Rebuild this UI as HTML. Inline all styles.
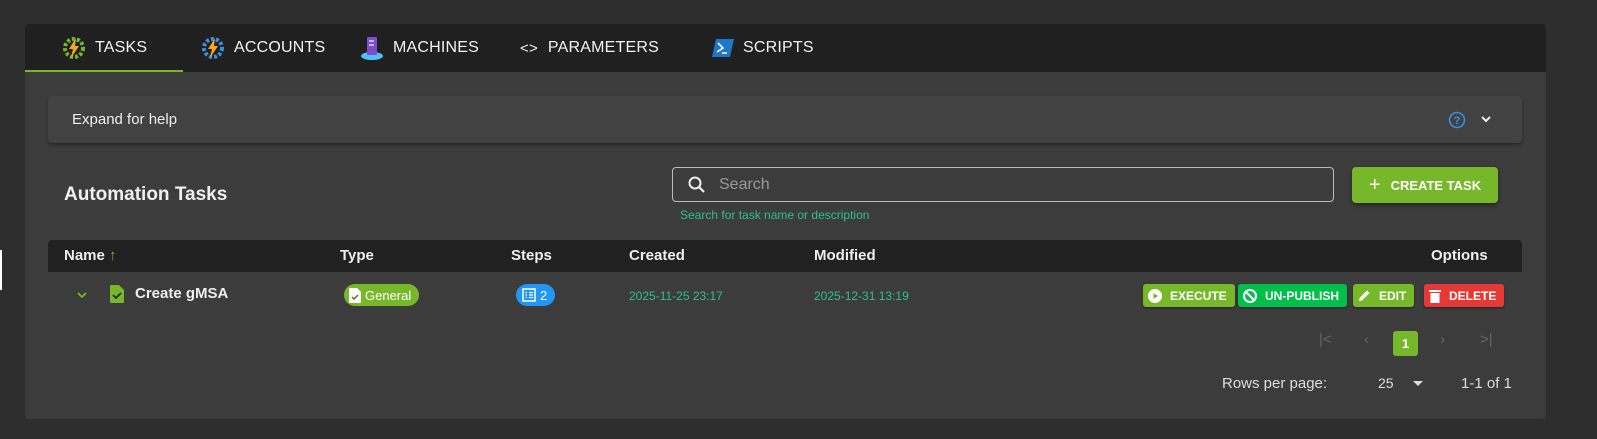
<!DOCTYPE html>
<html><head><meta charset="utf-8"><style>
*{box-sizing:border-box;margin:0;padding:0}
body{width:1597px;height:439px;background:#2e2e2e;font-family:"Liberation Sans",sans-serif;color:#eee;position:relative;overflow:hidden}
.card{position:absolute;left:25px;top:24px;width:1521px;height:395px;background:#3c3c3c;border-radius:4px;overflow:hidden}
.nav{position:absolute;left:0;top:0;width:100%;height:48px;background:#202020}
.tab{position:absolute;top:0;height:48px;display:flex;align-items:center;font-size:16px;color:#f2f2f2;letter-spacing:.2px}
.tab svg{margin-right:8px}
.ul{position:absolute;left:0;top:46px;width:158px;height:2px;background:#76b82a}
.help{position:absolute;left:23px;top:72px;width:1474px;height:47px;background:#424242;border-radius:4px;box-shadow:0 2px 3px rgba(0,0,0,.35);font-size:15px;display:flex;align-items:center;padding-left:24px}
h2{position:absolute;left:39px;top:160px;font-size:19px;font-weight:bold;color:#f0f0f0}
.search{position:absolute;left:647px;top:143px;width:662px;height:35px;border:1px solid #bbb;border-radius:4px;display:flex;align-items:center;padding-left:14px;color:#999;font-size:16px}
.hint{position:absolute;left:655px;top:184px;font-size:12px;color:#2fbf8f}
.create{position:absolute;left:1327px;top:143px;width:146px;height:36px;background:#76b82a;border-radius:4px;box-shadow:0 2px 4px rgba(0,0,0,.4);font-size:13px;font-weight:bold;color:#fff;display:flex;align-items:center;justify-content:center;gap:10px}
.th{position:absolute;left:23px;top:216px;width:1474px;height:32px;background:#212121;border-radius:4px 4px 0 0;font-weight:bold;font-size:15px}
.th span{position:absolute;top:7px}
.row{position:absolute;left:23px;top:248px;width:1474px;height:44px}
.chip{position:absolute;top:12px;height:22px;border-radius:11px;display:flex;align-items:center;font-size:13px;color:#fff;padding:0 8px 0 5px;gap:4px}
.date{position:absolute;top:17px;font-size:12px;color:#2fbf8f}
.btn{position:absolute;top:12px;height:23px;border-radius:3px;color:#fff;font-size:12px;font-weight:bold;display:flex;align-items:center;padding:0 8px 0 5px;gap:8px;box-shadow:0 1px 2px rgba(0,0,0,.4)}
.pg{position:absolute;top:307px;color:#666;font-size:15px}
</style></head><body>
<div style="position:absolute;left:0;top:250px;width:2px;height:40px;background:#fff"></div>
<div class="card">
<div class="nav">
 <div class="tab" style="left:36px"><svg width="26" height="26" viewBox="0 0 26 26"><circle cx="13" cy="13" r="9" fill="none" stroke="#76b82a" stroke-width="4" stroke-dasharray="3 2"/><path d="M15 3 L8 14 H12 L10 23 L18 11 H14 Z" fill="#f7a823"/></svg>TASKS</div>
 <div class="tab" style="left:175px"><svg width="26" height="26" viewBox="0 0 26 26"><circle cx="13" cy="13" r="9" fill="none" stroke="#3b8fe0" stroke-width="4" stroke-dasharray="3 2"/><path d="M15 3 L8 14 H12 L10 23 L18 11 H14 Z" fill="#f7a823"/></svg>ACCOUNTS</div>
 <div class="tab" style="left:334px"><svg width="26" height="26" viewBox="0 0 26 26"><ellipse cx="13" cy="21" rx="11" ry="4" fill="#4fc3f7"/><rect x="8" y="2" width="10" height="18" rx="1" fill="#7c4dcc"/><rect x="10" y="5" width="5" height="2" fill="#c9b6f0"/><rect x="10" y="9" width="5" height="2" fill="#c9b6f0"/></svg>MACHINES</div>
 <div class="tab" style="left:495px"><span style="margin-right:10px;font-size:15px">&lt;&gt;</span>PARAMETERS</div>
 <div class="tab" style="left:686px"><svg width="24" height="22" viewBox="0 0 24 22"><path d="M5 2 H23 L19 20 H1 Z" fill="#1e78c8"/><path d="M7 6 L12 11 L6 15 M11 16 H16" stroke="#fff" stroke-width="1.6" fill="none"/></svg>SCRIPTS</div>
 <div class="ul"></div>
</div>
<div class="help">Expand for help
 <svg style="position:absolute;left:1400px;top:15px" width="18" height="18" viewBox="0 0 18 18"><circle cx="9" cy="9" r="7.5" fill="none" stroke="#3b8fe0" stroke-width="1.6"/><text x="9" y="13" font-size="11" text-anchor="middle" fill="#3b8fe0" font-family="Liberation Sans" font-weight="bold">?</text></svg>
 <svg style="position:absolute;left:1432px;top:17px" width="12" height="12" viewBox="0 0 12 12"><path d="M2 4 L6 8 L10 4" stroke="#eee" stroke-width="2" fill="none"/></svg>
</div>
<h2>Automation Tasks</h2>
<div class="search"><svg width="20" height="20" viewBox="0 0 20 20" style="margin-right:12px"><circle cx="8" cy="8" r="5.5" fill="none" stroke="#eee" stroke-width="2"/><path d="M12 12 L17 17" stroke="#eee" stroke-width="2.2"/></svg>Search</div>
<div class="hint">Search for task name or description</div>
<div class="create"><span style="font-size:20px;font-weight:normal">+</span>CREATE TASK</div>
<div class="th"><span style="left:16px">Name <span style="position:static;color:#76b82a">↑</span></span><span style="left:292px">Type</span><span style="left:463px">Steps</span><span style="left:581px">Created</span><span style="left:766px">Modified</span><span style="left:1383px">Options</span></div>
<div class="row">
 <svg style="position:absolute;left:28px;top:18px" width="12" height="10" viewBox="0 0 12 10"><path d="M2 3 L6 7 L10 3" stroke="#76b82a" stroke-width="1.8" fill="none"/></svg>
 <svg style="position:absolute;left:62px;top:13px" width="14" height="18" viewBox="0 0 14 18"><path d="M0 1 Q0 0 1 0 H9 L14 5 V17 Q14 18 13 18 H1 Q0 18 0 17Z" fill="#76b82a"/><path d="M3 10 L6 13 L11 8" stroke="#2b2b2b" stroke-width="1.8" fill="none"/></svg>
 <span style="position:absolute;left:87px;top:13px;font-weight:bold;font-size:15px">Create gMSA</span>
 <div class="chip" style="left:296px;background:#76b82a"><svg width="12" height="15" viewBox="0 0 12 15"><path d="M0 0 H8 L12 4 V15 H0Z" fill="#fff"/><path d="M3 9 L5 11 L9 7" stroke="#4a7a18" stroke-width="1.5" fill="none"/></svg>General</div>
 <div class="chip" style="left:468px;background:#2196f3;padding:0 8px 0 6px"><svg width="14" height="14" viewBox="0 0 14 14"><rect x="1" y="1" width="12" height="12" fill="none" stroke="#fff" stroke-width="1.5"/><path d="M3.5 4.5H5 M7 4.5H11 M3.5 7H5 M7 7H11 M3.5 9.5H5 M7 9.5H11" stroke="#fff" stroke-width="1.2"/></svg>2</div>
 <span class="date" style="left:581px">2025-11-25 23:17</span>
 <span class="date" style="left:766px">2025-12-31 13:19</span>
 <div class="btn" style="left:1095px;background:#76b82a"><svg width="14" height="14" viewBox="0 0 14 14"><circle cx="7" cy="7" r="7" fill="#fff"/><path d="M5.5 4 L10 7 L5.5 10Z" fill="#76b82a"/></svg>EXECUTE</div>
 <div class="btn" style="left:1190px;background:#00c04b"><svg width="14" height="14" viewBox="0 0 14 14"><circle cx="7" cy="7" r="6" fill="none" stroke="#fff" stroke-width="2"/><path d="M2 2 L12 12" stroke="#fff" stroke-width="2"/></svg>UN-PUBLISH</div>
 <div class="btn" style="left:1305px;background:#76b82a"><svg width="13" height="13" viewBox="0 0 13 13"><path d="M1 12 L1.5 9 L9 1.5 L11.5 4 L4 11.5Z" fill="#fff"/></svg>EDIT</div>
 <div class="btn" style="left:1376px;background:#e53935"><svg width="12" height="14" viewBox="0 0 12 14"><rect x="0" y="1" width="12" height="2" fill="#fff"/><rect x="1.5" y="4" width="9" height="10" fill="#fff"/></svg>DELETE</div>
</div>
<span class="pg" style="left:1294px">|&lt;</span>
<span class="pg" style="left:1339px">‹</span>
<div style="position:absolute;left:1368px;top:307px;width:25px;height:25px;background:#76b82a;border-radius:3px;color:#fff;font-size:13px;font-weight:bold;text-align:center;line-height:25px">1</div>
<span class="pg" style="left:1415px">›</span>
<span class="pg" style="left:1455px">&gt;|</span>
<span style="position:absolute;left:1197px;top:351px;font-size:15px;color:#ddd">Rows per page:</span>
<span style="position:absolute;left:1353px;top:351px;font-size:14px;color:#ddd">25</span>
<svg style="position:absolute;left:1388px;top:357px" width="10" height="6" viewBox="0 0 10 6"><path d="M0 0 H10 L5 5Z" fill="#ddd"/></svg>
<span style="position:absolute;left:1436px;top:351px;font-size:15px;color:#ddd">1-1 of 1</span>
</div>
</body></html>
